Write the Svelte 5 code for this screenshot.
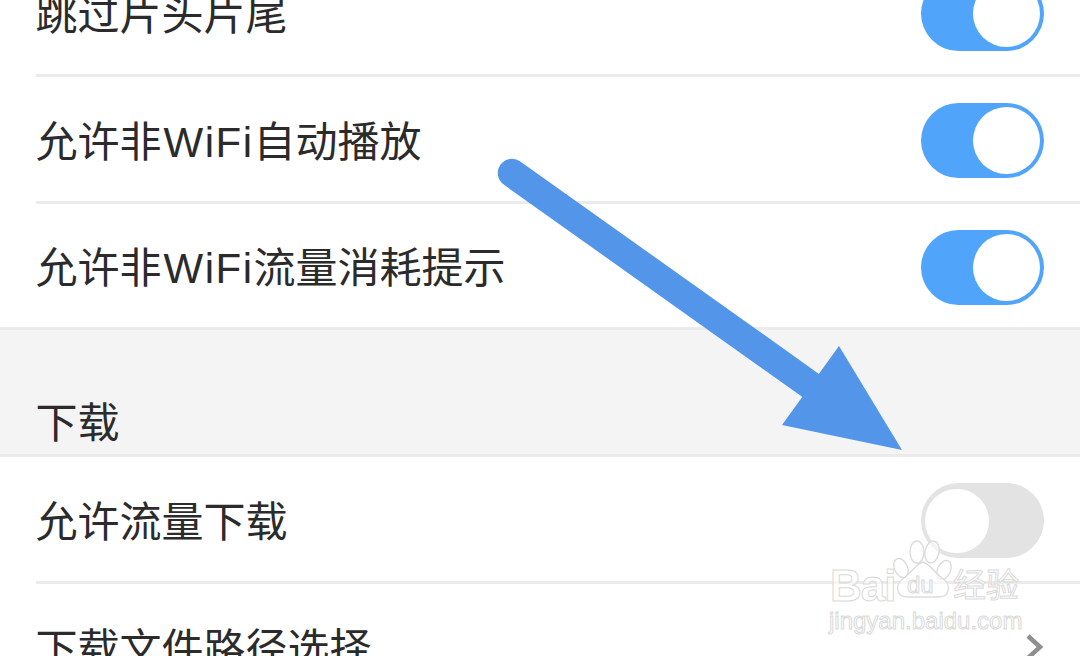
<script lang="ts">
  type Row = { label: string; toggle?: boolean; inset?: boolean; chevron?: boolean }

  const playback: Row[] = [
    { label: '跳过片头片尾', toggle: true, inset: true },
    { label: '允许非WiFi自动播放', toggle: true, inset: true },
    { label: '允许非WiFi流量消耗提示', toggle: true }
  ]
  const download: Row[] = [
    { label: '允许流量下载', toggle: false, inset: true },
    { label: '下载文件路径选择', chevron: true }
  ]

  // latin runs get their own font, the CJK font sets "WiFi" too tight
  const parts = (label: string) => label.split(/([A-Za-z]+)/).filter(Boolean)
</script>

{#snippet settingRow(row: Row)}
  <div class="row" class:inset={row.inset}>
    <span class="label">{#each parts(row.label) as part}{#if /^[A-Za-z]/.test(part)}<span class="latin">{part}</span>{:else}{part}{/if}{/each}</span>
    {#if row.chevron}
      <svg class="chevron" width="20" height="30" viewBox="0 0 20 30">
        <path d="M3 3 L15 14 L3 25" fill="none" stroke="#8f8f8f" stroke-width="4.5" />
      </svg>
    {:else}
      <span class="switch" class:on={row.toggle}><span class="knob"></span></span>
    {/if}
  </div>
{/snippet}

<div class="screen">
  <div class="list">
    {#each playback as row}
      {@render settingRow(row)}
    {/each}
    <div class="section">下载</div>
    {#each download as row}
      {@render settingRow(row)}
    {/each}
  </div>

  <svg class="arrow" width="1080" height="656" viewBox="0 0 1080 656">
    <path d="M512 173 L810 385" stroke="#5295e9" stroke-width="28.5" stroke-linecap="round" fill="none" />
    <polygon points="839,346 902,450 782,425" fill="#5295e9" />
  </svg>

  <div class="watermark">
    <svg class="paw" width="70" height="70" viewBox="0 0 70 70">
      <g fill="#fff" fill-opacity="0.6" stroke="#dcdcdc" stroke-width="1.4">
        <ellipse cx="9" cy="28" rx="6.5" ry="10" transform="rotate(-25 9 28)" />
        <ellipse cx="25" cy="12" rx="7" ry="11" />
        <ellipse cx="40" cy="12" rx="7" ry="11" transform="rotate(12 40 12)" />
        <ellipse cx="52" cy="30" rx="6.5" ry="10" transform="rotate(25 52 30)" />
        <path d="M31 22 C38 24 42 32 50 38 C60 45 58 57 46 57 L16 57 C4 57 2 45 12 38 C20 32 24 24 31 22 Z" />
      </g>
    </svg>
    <span class="bai">Bai</span>
    <span class="du">du</span>
    <span class="jy">经验</span>
    <span class="url">jingyan.baidu.com</span>
  </div>
</div>

<style>
  :global(body) {
    margin: 0;
    background: #fff;
    overflow: hidden;
  }
  .screen {
    position: relative;
    width: 1080px;
    height: 656px;
    overflow: hidden;
    font-family: "Noto Sans CJK SC", "Noto Sans", sans-serif;
    color: #2b2b2b;
  }
  .list {
    margin-top: -50px;
    display: flex;
    flex-direction: column;
  }
  .row {
    position: relative;
    box-sizing: border-box;
    height: 126.75px;
    flex: none;
    padding: 0.75px 36px 0 35.5px;
    display: flex;
    align-items: center;
    justify-content: space-between;
    font-size: 42px;
    line-height: 1;
  }
  .row::after {
    content: "";
    position: absolute;
    left: 0;
    right: 0;
    bottom: 0;
    height: 3px;
    background: #ebebeb;
  }
  .row.inset::after {
    left: 36px;
  }
  .label {
    padding-bottom: 4px;
    white-space: nowrap;
  }
  .latin {
    font-family: "Liberation Sans", sans-serif;
    letter-spacing: 1.5px;
    margin-left: 2px;
    line-height: 0;
  }
  .section {
    box-sizing: border-box;
    height: 126.75px;
    flex: none;
    padding: 0 36px 13px 35.5px;
    display: flex;
    align-items: flex-end;
    background: #f4f4f4;
    border-bottom: 3px solid #ebebeb;
    font-size: 42px;
    line-height: 1;
  }
  .switch {
    box-sizing: border-box;
    width: 123px;
    height: 75px;
    border-radius: 38px;
    background: #e3e3e3;
    display: flex;
    align-items: center;
    padding-left: 1px;
  }
  .switch .knob {
    box-sizing: border-box;
    width: 70px;
    height: 70px;
    border-radius: 50%;
    background: #fff;
    border: 3px solid #e3e3e3;
  }
  .switch.on {
    background: #50a5fb;
    justify-content: flex-end;
    padding: 0 4px 0 0;
  }
  .switch.on .knob {
    width: 67px;
    height: 67px;
    border: none;
  }
  .chevron {
    margin-right: -1px;
  }
  .arrow {
    position: absolute;
    left: 0;
    top: 0;
  }
  .watermark {
    position: absolute;
    left: 825px;
    top: 535px;
    width: 205px;
    height: 105px;
    font-family: "Liberation Sans", sans-serif;
    color: rgba(255, 255, 255, 0.65);
    -webkit-text-stroke: 1px #dadada;
  }
  .paw {
    position: absolute;
    left: 67px;
    top: 5px;
  }
  .bai,
  .du,
  .jy,
  .url {
    position: absolute;
    line-height: 1;
    white-space: nowrap;
  }
  .bai {
    left: 5px;
    top: 29px;
    font-size: 44px;
    font-weight: 700;
    letter-spacing: -1px;
  }
  .du {
    left: 82px;
    top: 38px;
    font-size: 24px;
  }
  .jy {
    left: 128px;
    top: 32px;
    font-size: 33px;
    font-family: "Noto Sans CJK SC", sans-serif;
  }
  .url {
    left: 4px;
    top: 74px;
    font-size: 24px;
  }
</style>
